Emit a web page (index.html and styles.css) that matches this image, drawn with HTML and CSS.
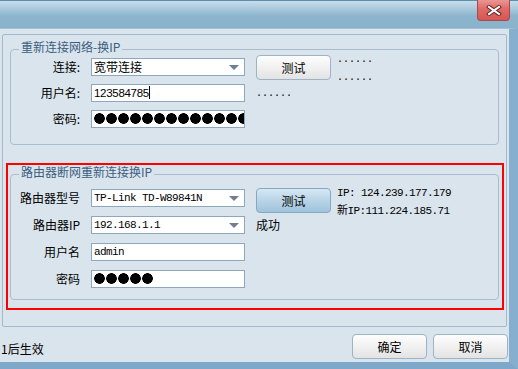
FILE: index.html
```html
<!DOCTYPE html>
<html lang="zh-CN">
<head>
  <meta charset="UTF-8" />
  <title>重新连接换IP</title>
  <link rel="stylesheet" href="styles.css">
</head>
<body>
  <div class="window">
    <div class="titlebar">
      <div class="close">
        <svg width="16" height="11" viewBox="0 0 16 11">
          <path d="M3 2 L13 9 M13 2 L3 9" stroke="#6b2a2a" stroke-width="4" stroke-linecap="square"/>
          <path d="M3 2 L13 9 M13 2 L3 9" stroke="#fff" stroke-width="2" stroke-linecap="square"/>
        </svg>
      </div>
    </div>

    <div class="client">
      <div class="panel">

        <!-- network reconnect -->
        <div class="group g1">
          <div class="group-title">重新连接网络-换IP</div>
          <div class="form">
            <label>连接:</label>
            <div class="field select">宽带连接<i class="arrow"></i></div>
            <button class="btn btn-test">测试</button>
            <div class="note note-side">......<br>......</div>

            <label>用户名:</label>
            <div class="field field-num">123584785<span class="caret"></span></div>
            <div class="note note-under">......</div>
            <div></div>

            <label>密码:</label>
            <div class="field"><span class="pw pw-long"></span></div>
          </div>
        </div>

        <!-- router reconnect -->
        <div class="highlight">
          <div class="group g2">
            <div class="group-title">路由器断网重新连接换IP</div>
            <div class="form">
              <label>路由器型号</label>
              <div class="field select mono">TP-Link TD-W89841N<i class="arrow"></i></div>
              <button class="btn btn-test btn-default">测试</button>
              <div class="ip-info">IP: 124.239.177.179<br>新IP:111.224.185.71</div>

              <label>路由器IP</label>
              <div class="field select mono">192.168.1.1<i class="arrow"></i></div>
              <div class="status">成功</div>
              <div></div>

              <label>用户名</label>
              <div class="field mono">admin</div>
              <div></div>
              <div></div>

              <label>密码</label>
              <div class="field"><span class="pw pw-short"></span></div>
            </div>
          </div>
        </div>

      </div>

      <div class="footer">
        <span class="hint">1后生效</span>
        <button class="btn">确定</button>
        <button class="btn">取消</button>
      </div>
    </div>
  </div>
</body>
</html>
```

FILE: styles.css
```css
* {
  box-sizing: border-box;
}

body {
  margin: 0;
  width: 518px;
  height: 369px;
  overflow: hidden;
  font-family: "Noto Sans CJK SC", "Liberation Sans", sans-serif;
  font-size: 12px;
  color: #000;
  background: #7ca6c8;
}

.window {
  width: 518px;
  height: 369px;
  display: flex;
  flex-direction: column;
}

.titlebar {
  height: 28px;
  border-top: 1px solid #5b8db3;
  background: linear-gradient(#c8dde9, #a8c8dc 30%, #8cb5cd 55%, #89b2cb);
  display: flex;
  justify-content: flex-end;
  padding-right: 8px;
}

.close {
  width: 33px;
  height: 21px;
  margin-top: -1px;
  border: 1px solid #a8484a;
  border-top: none;
  border-radius: 0 0 4px 4px;
  background: linear-gradient(#eb9591, #e06a66 45%, #d65652);
  display: flex;
  align-items: center;
  justify-content: center;
}

.client {
  width: 518px;
  height: 341px;
  background: #dae4ed;
  border-top: 1px solid #a7c2d6;
  border-right: 9px solid #86afcf;
  border-bottom: 7px solid #7ea8ca;
  padding: 5px 0 0 2px;
}

.panel {
  width: 505px;
  height: 293px;
  border: 1px solid #a3b9cb;
  border-radius: 2px;
  padding-top: 14px;
}

.group {
  border: 1px solid #a8bed0;
  border-radius: 4px;
  width: 489px;
}

.g1 {
  height: 96px;
  margin-left: 7px;
}

.group-title {
  width: fit-content;
  margin: -10px 0 0 8px;
  padding: 0 2px;
  height: 14px;
  line-height: 14px;
  background: #dae4ed;
  color: #3a5e80;
  font-size: 12px;
}

.form {
  display: grid;
  grid-template-columns: 80px 165px 81px 1fr;
  grid-auto-rows: 18px;
  row-gap: 8px;
  margin-top: 4px;
}

.g2 .form {
  row-gap: 9px;
  margin-top: 10px;
}

.form label {
  text-align: right;
  padding-right: 11px;
  line-height: 18px;
}

.field {
  width: 154px;
  height: 18px;
  border: 1px solid #8fa7bd;
  background: #fff;
  padding: 0 2px;
  line-height: 16px;
  white-space: nowrap;
  overflow: hidden;
  position: relative;
}

.select .arrow {
  position: absolute;
  right: 5px;
  top: 6px;
  width: 0;
  height: 0;
  border-left: 5px solid transparent;
  border-right: 5px solid transparent;
  border-top: 5px solid #6d7f91;
}

.mono {
  font-family: "Liberation Mono", "Noto Sans CJK SC", monospace;
  font-size: 11px;
  letter-spacing: -0.6px;
}

.field-num {
  font-family: "Liberation Sans", sans-serif;
  font-size: 11.5px;
  letter-spacing: -0.3px;
}

.caret {
  display: inline-block;
  width: 1px;
  height: 13px;
  background: #000;
  vertical-align: -2px;
}

.pw {
  display: block;
  height: 11px;
  margin-top: 2px;
  background: radial-gradient(circle at 5.5px 5.5px, #000 5px, transparent 5.6px) 0 0 / 12px 11px repeat-x;
}

.pw-long {
  width: 200px;
}

.pw-short {
  width: 60px;
}

.btn {
  width: 75px;
  height: 25px;
  border: 1px solid #9db3c6;
  border-radius: 4px;
  background: linear-gradient(#fdfdfd, #f1f1f1 50%, #e3e3e3);
  font-family: "Noto Sans CJK SC", sans-serif;
  font-size: 12px;
  color: #000;
  padding: 0;
}

.btn-test {
  align-self: start;
  margin-top: -3px;
}

.btn-default {
  margin-top: -1px;
  border-color: #86a8c2;
  background: linear-gradient(#d6e8f3, #b8d4e6 50%, #9fc3dc);
}

.note {
  font-family: "Liberation Mono", monospace;
  font-size: 10px;
  line-height: 18px;
}

.note-side {
  align-self: start;
  margin-top: -7px;
}

.note-under {
  margin-top: 1px;
}

.ip-info {
  align-self: start;
  margin-top: -5px;
  line-height: 18px;
  white-space: nowrap;
  font-family: "Liberation Mono", "Noto Sans CJK SC", monospace;
  font-size: 11px;
  letter-spacing: -0.6px;
}

.status {
  line-height: 18px;
}

.highlight {
  width: 498px;
  height: 147px;
  margin: 18px 0 0 3px;
  border: 2px solid #ff0000;
  padding: 9px 0 0 2px;
}

.g2 {
  height: 126px;
}

.footer {
  display: flex;
  align-items: center;
  gap: 6px;
  padding: 7px 1px 0 0;
}

.hint {
  flex: 1;
  margin: 4px 0 0 -1px;
}
```
